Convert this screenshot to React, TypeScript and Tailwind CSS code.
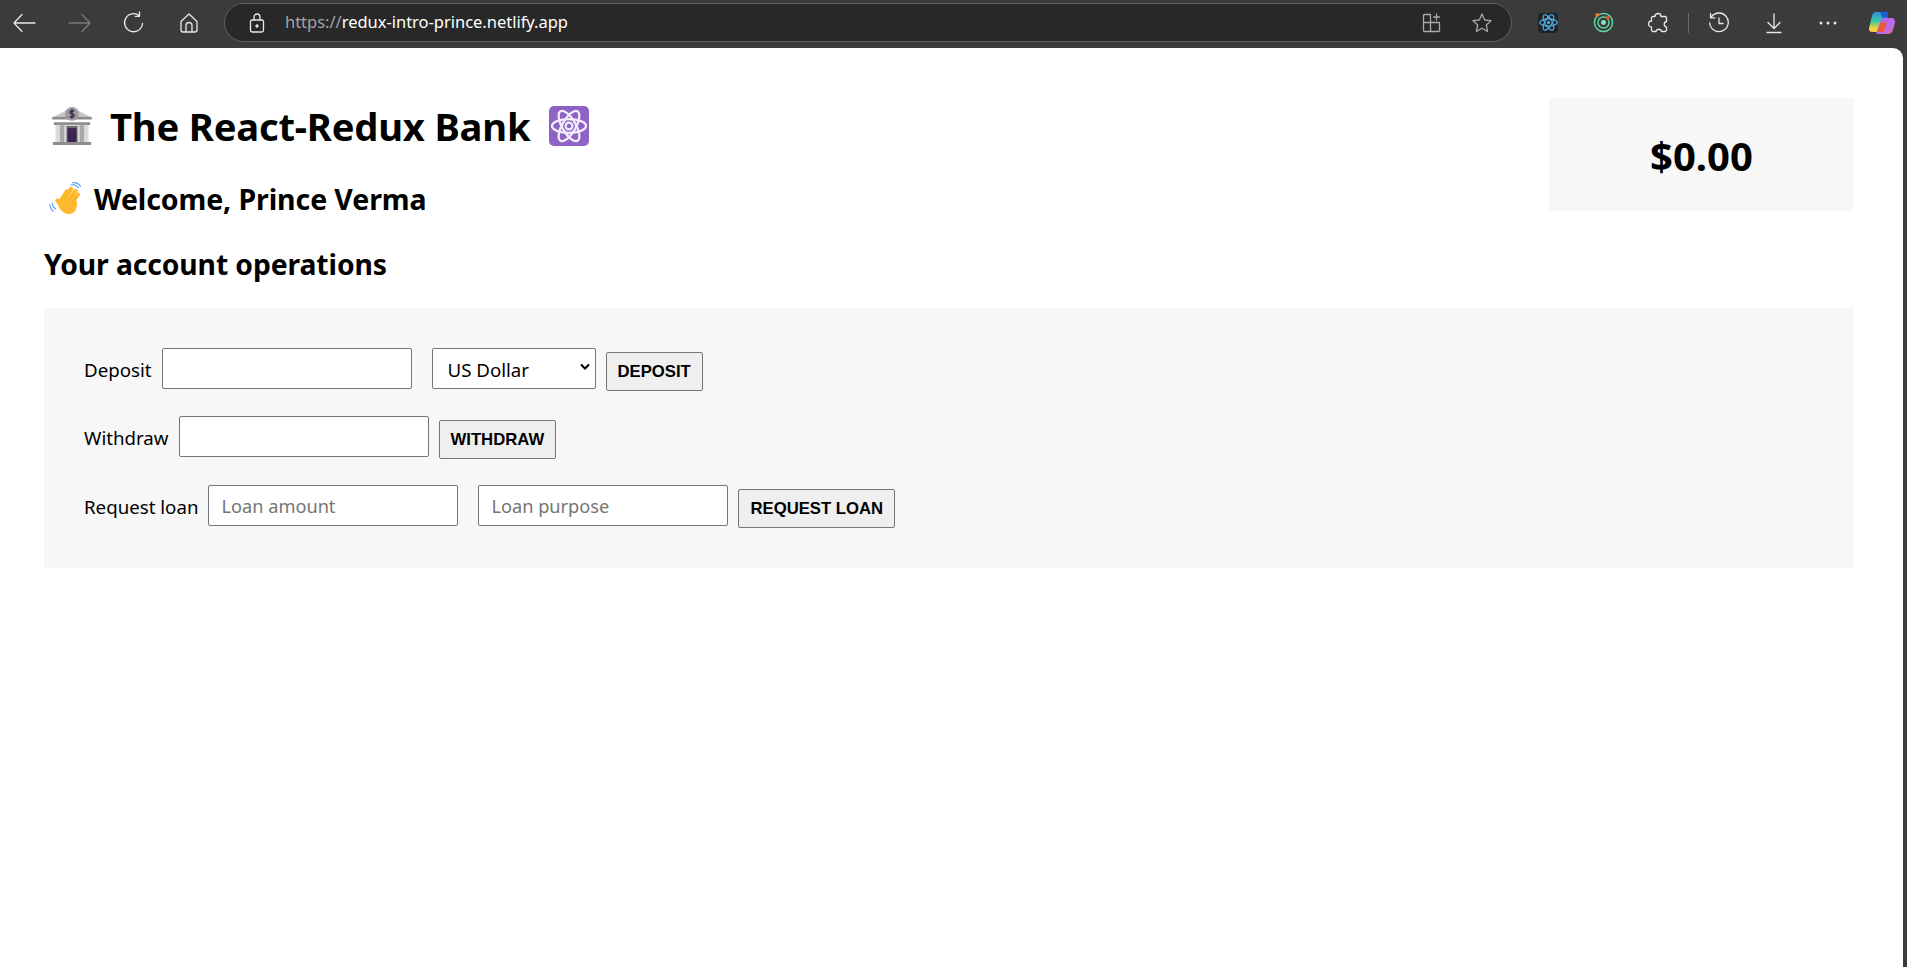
import React from "react";

const ui = "font-['Noto_Sans',sans-serif]";

function Ico({ cx, children, w = 24, h = 24, vb = "0 0 24 24" }: { cx: string; children: React.ReactNode; w?: number; h?: number; vb?: string }) {
  return (
    <svg width={w} height={h} viewBox={vb} fill="none" stroke="currentColor" strokeWidth="1.3" strokeLinecap="round" strokeLinejoin="round" className={cx}>
      {children}
    </svg>
  );
}

function Bank({ size = 46 }: { size?: number }) {
  return (
    <svg width={size} height={size} viewBox="0 0 40 40">
      <path d="M20 3 L37 12 H3 Z" fill="#c9c7c8" />
      <rect x="2" y="11.5" width="36" height="2.6" rx="0.8" fill="#8e8c8e" />
      <rect x="3.5" y="16.5" width="33" height="2.6" rx="0.8" fill="#8e8c8e" />
      <rect x="5" y="19" width="30" height="16" fill="#dcdadb" />
      <rect x="9" y="19" width="4" height="16" fill="#a9a7a8" />
      <rect x="27" y="19" width="4" height="16" fill="#a9a7a8" />
      <rect x="15" y="20" width="10" height="15" fill="#6d6b6d" />
      <rect x="16" y="22" width="8" height="13" fill="#3b2354" />
      <rect x="2.5" y="34.5" width="35" height="2.8" rx="0.8" fill="#8e8c8e" />
      <circle cx="20" cy="9" r="6.3" fill="#9d9b9d" />
      <path d="M22 6.6c-.8-.8-3.8-1-3.9.9-.1 1.9 3.9 1.1 3.9 3.1 0 1.900-3.400 1.600-4.300.6M20 4.800v8.400" stroke="#33204b" strokeWidth="1.200" fill="none" />
    </svg>
  );
}

function Wave({ size = 34 }: { size?: number }) {
  return (
    <svg width={size} height={size} viewBox="0 0 34 34">
      <g stroke="#ffb92e" strokeLinecap="round" fill="none">
        <path d="M12 19 18 9.500" strokeWidth="4.400" />
        <path d="M15 18 22 7" strokeWidth="4.400" />
        <path d="M19 19 26.500 9" strokeWidth="4.400" />
        <path d="M22.500 21 29 12.500" strokeWidth="4" />
        <path d="M11.500 22 8.500 18.500" strokeWidth="4.400" />
      </g>
      <path d="M9.500 21 14 15l14 4c.3 6-1 12-7 13-5 .8-9-3-11.500-7.500z" fill="#ffb92e" />
      <path d="M15 17.500 19.500 11M19.500 19l5-7M23 21l4.500-6" stroke="#e89a1a" strokeWidth="0.600" fill="none" />
      <path d="M22 3c3-.8 6 .5 7.500 3M23.500 .8c3-.5 6 .5 8 3.500M3 21c.3 2.500 1.400 4.500 3.500 6M.7 22.500c.4 2.500 1.500 5 3.500 6.800" stroke="#5b9cf5" strokeWidth="1.100" fill="none" strokeLinecap="round" />
    </svg>
  );
}

function Atom({ size = 40 }: { size?: number }) {
  return (
    <svg width={size} height={size} viewBox="0 0 40 40">
      <rect width="40" height="40" rx="5" fill="#8e63c3" />
      <g fill="none" stroke="#f3ecfb" strokeWidth="2.300">
        <ellipse cx="20" cy="20" rx="17" ry="6.800" />
        <ellipse cx="20" cy="20" rx="17" ry="6.800" transform="rotate(60 20 20)" />
        <ellipse cx="20" cy="20" rx="17" ry="6.800" transform="rotate(120 20 20)" />
        <circle cx="20" cy="20" r="3.400" />
      </g>
    </svg>
  );
}

function Toolbar() {
  return (
    <div className={`flex h-12 items-center bg-[#3b3b3b] pb-[3px] text-[#e8e8e8] ${ui}`}>
      <div className="flex w-[224px] shrink-0 items-center pl-[12px]">
        <div className="flex w-[55px] items-center">
          <Ico cx=""><path d="M23 12H2M10 3.500 2 12l8 8.500" /></Ico>
        </div>
        <div className="flex w-[55px] items-center text-[#7a7a7a]">
          <Ico cx=""><path d="M2 12h21M15 3.500 23 12l-8 8.500" /></Ico>
        </div>
        <div className="flex w-[55px] items-center">
          <Ico cx=""><path d="M20.500 12.500a9 9 0 1 1-3-7.500M17.500 1v4.300h-4.300" /></Ico>
        </div>
        <div className="flex items-center">
          <Ico cx=""><path d="M9 21v-6.500a3 3 0 0 1 6 0V21M4 10.500 12 3l8 7.500V19a2 2 0 0 1-2 2H6a2 2 0 0 1-2-2z" /></Ico>
        </div>
      </div>
      <div className="flex h-[39px] w-[1288px] shrink-0 items-center rounded-full border border-[#606060] bg-[#282828] pl-[24px] pr-[18px]">
        <Ico cx="mr-[20px] shrink-0" w={16} h={20} vb="0 0 16 20">
          <rect x="1.500" y="7" width="13" height="12" rx="1.800" />
          <path d="M5 7V4a3 3 0 0 1 6 0v3" />
          <circle cx="8" cy="13" r="1" fill="currentColor" />
        </Ico>
        <div className="text-[16.500px] leading-none tracking-[-0.02px] whitespace-nowrap">
          <span className="text-[#a3a3a3]">https://</span>
          <span className="text-white">redux-intro-prince.netlify.app</span>
        </div>
        <div className="ml-auto flex items-center text-[#a8a8a8]">
          <Ico cx="mr-[28px]" w={22} h={22} vb="0 0 22 22">
            <path d="M9.500 2.500H3.500a1 1 0 0 0-1 1v15a1 1 0 0 0 1 1h14a1 1 0 0 0 1-1V10.500H9.500zM2.500 10.500h7M9.500 10.500v9M15.500 2v6M12.500 5h6" />
          </Ico>
          <Ico cx="" w={22} h={22} vb="0 0 22 22">
            <path d="m11 2 2.700 6 6.300.7-4.700 4.300 1.300 6.500L11 16.200 5.400 19.500 6.700 13 2 8.700 8.300 8z" />
          </Ico>
        </div>
      </div>
      <div className="flex flex-1 items-center pl-[26px]">
        <div className="flex h-[20px] w-[20px] items-center justify-center rounded-[2px] bg-[#20232a] text-[#61dafb]">
          <svg width="19" height="19" viewBox="0 0 24 24" fill="none" stroke="#4db6e6" strokeWidth="1.500">
            <ellipse cx="12" cy="12" rx="11" ry="4.500" />
            <ellipse cx="12" cy="12" rx="11" ry="4.500" transform="rotate(60 12 12)" />
            <ellipse cx="12" cy="12" rx="11" ry="4.500" transform="rotate(120 12 12)" />
            <circle cx="12" cy="12" r="2" fill="#4db6e6" stroke="none" />
          </svg>
        </div>
        <svg width="21" height="21" viewBox="0 0 22 22" fill="none" className="ml-[35px]">
          <circle cx="11" cy="11" r="9.500" stroke="#5fd6a5" strokeWidth="1.500" />
          <circle cx="11" cy="11" r="5.800" stroke="#5fd6a5" strokeWidth="1.500" />
          <circle cx="11" cy="11" r="2.600" fill="#7ee8c0" />
          <circle cx="4.500" cy="3" r="2" fill="#ee7a2c" />
          <circle cx="15.500" cy="6" r="2" fill="#e8502a" />
        </svg>
        <Ico cx="ml-[34px]" w={21} h={22} vb="0 0 21 22">
          <path d="M7 4.500a3 3 0 0 1 6 0h4a1.500 1.500 0 0 1 1.500 1.500v3.500a2.800 2.800 0 0 0 0 5.500v3a1.500 1.500 0 0 1-1.500 1.500h-3.500a2.800 2.800 0 0 0-5.500 0H5a1.500 1.500 0 0 1-1.500-1.500V15a3 3 0 0 1 0-6V6A1.500 1.500 0 0 1 5 4.500z" />
        </Ico>
        <div className="ml-[19px] h-[20px] w-[1px] bg-[#6a6a6a]" />
        <Ico cx="ml-[19px]" w={22} h={22} vb="0 0 22 22">
          <path d="M3 5.500A9.300 9.300 0 1 1 1.700 11M2.500 1.500v4.300h4.300M11 6v5.500h4" />
        </Ico>
        <Ico cx="ml-[34px]" w={20} h={22} vb="0 0 20 22">
          <path d="M10 2v14M4 10.500l6 6 6-6M3 20.500h14" />
        </Ico>
        <svg width="18" height="4" viewBox="0 0 18 4" className="ml-[35px]" fill="#e8e8e8">
          <circle cx="2" cy="2" r="1.500" /><circle cx="9" cy="2" r="1.500" /><circle cx="16" cy="2" r="1.500" />
        </svg>
        <svg width="28" height="26" viewBox="0 0 28 26" className="ml-[31px]">
          <defs>
            <linearGradient id="cpa" x1="0" y1="0" x2="0" y2="1">
              <stop offset="0" stopColor="#2f8fe8" /><stop offset="0.45" stopColor="#38c9a0" /><stop offset="0.8" stopColor="#f2d23a" />
            </linearGradient>
            <linearGradient id="cpb" x1="0" y1="0" x2="1" y2="1">
              <stop offset="0" stopColor="#c45ee0" /><stop offset="0.6" stopColor="#b86cf0" /><stop offset="1" stopColor="#f0607a" />
            </linearGradient>
          </defs>
          <path d="M8 2h10c2 0 2.500 1.500 2 3l-5 15c-.5 1.500-2 2-3 2H4.500C2 22 .5 20.500 1 18L4 6c.5-2.500 2-4 4-4z" fill="url(#cpa)" />
          <path d="M15 8h8c2.500 0 4.500 2 4 4.500L25 20c-.6 2.500-2.500 4-5 4H10c-1.500 0-2-1-1.500-2L13 10c.3-1 1-2 2-2z" fill="url(#cpb)" />
          <path d="M13 12 9 22h5c1 0 2-.5 2.400-1.500L19 13z" fill="#ec5a3c" />
          <path d="M12 1.800h6c2 0 2.500 1.500 2 3l-1 3h-5z" fill="#1c5fd6" />
        </svg>
      </div>
    </div>
  );
}

const field = "h-[41px] w-[250px] rounded-[2px] border border-[#767676] bg-white px-[12px] pt-[1px] text-[18.200px] text-black placeholder:text-[#757575] outline-none";
const btn = "h-[39px] rounded-[2px] border border-[#767676] bg-[#efefef] px-[11px] font-['Liberation_Sans',sans-serif] text-[16.700px] font-bold text-black";
const lbl = "mr-[10px] flex h-[41px] items-center pt-[3px] leading-none";

export default function App() {
  return (
    <div className="flex h-[967px] flex-col overflow-hidden bg-[#3b3b3b]">
      <Toolbar />
      <div className="flex flex-1 pr-[4px]">
        <main className={`flex-1 rounded-tr-[10px] bg-white pl-[44px] pr-[49px] text-black ${ui}`}>
          <div className="flex items-start justify-between">
            <div className="pt-[49px] font-bold">
              <div className="flex h-[58px] items-center pl-[6px]">
                <Bank size={44} />
                <h1 className="ml-[16px] text-[38.200px] leading-none tracking-[-0.2px]">The React-Redux Bank</h1>
                <span className="ml-[19px]"><Atom /></span>
              </div>
              <div className="mt-[22px] flex h-[44px] items-center pl-[5px]">
                <Wave />
                <h2 className="ml-[11px] text-[28.500px] leading-none tracking-[-0.1px]">Welcome, Prince Verma</h2>
              </div>
              <h3 className="mt-[21px] text-[28.300px] leading-[44px] tracking-[-0.1px]">Your account operations</h3>
            </div>
            <div className="mt-[50px] flex h-[113px] w-[305px] items-center justify-center bg-[#f7f7f7] pt-[3px] text-[40px] font-bold">$0.00</div>
          </div>
          <section className="mt-[22px] flex h-[260px] flex-col bg-[#f7f7f7] px-[40px] pt-[40px] text-[18.700px]">
            <div className="flex items-start">
              <label className={lbl}>Deposit</label>
              <input className={field} />
              <div className="relative ml-[20px] mr-[10px] h-[41px] w-[164px]">
                <select className="h-full w-full appearance-none rounded-[2px] border border-[#767676] bg-white pl-[15px] pt-[3px] text-black outline-none">
                  <option>US Dollar</option>
                </select>
                <svg width="12" height="8" viewBox="0 0 12 8" className="absolute right-[5px] top-[15px]" fill="none" stroke="#000" strokeWidth="2"><path d="m2 1.500 4 4 4-4" /></svg>
              </div>
              <button className={`${btn} mt-[4px]`}>DEPOSIT</button>
            </div>
            <div className="mt-[25px] flex items-start">
              <label className={lbl}>Withdraw</label>
              <input className={field} />
              <button className={`${btn} ml-[10px] mt-[4px]`}>WITHDRAW</button>
            </div>
            <div className="mt-[26px] flex items-start">
              <label className={lbl}>Request loan</label>
              <input className={field} placeholder="Loan amount" />
              <input className={`${field} ml-[20px]`} placeholder="Loan purpose" />
              <button className={`${btn} ml-[10px] mt-[4px]`}>REQUEST LOAN</button>
            </div>
          </section>
        </main>
      </div>
    </div>
  );
}
